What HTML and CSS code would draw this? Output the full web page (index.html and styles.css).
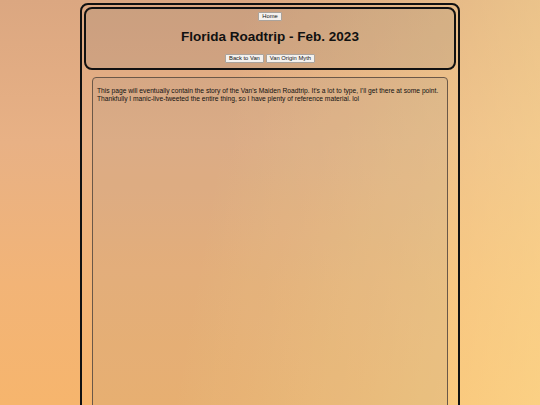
FILE: index.html
```html
<!DOCTYPE html>
<html>
<head>
<meta charset="utf-8">
<link rel="stylesheet" href="styles.css">
</head>
<body>
<div class="page">
  <header class="banner">
    <button class="btn">Home</button>
    <h1 class="title">Florida Roadtrip - Feb. 2023</h1>
    <div class="nav">
      <button class="btn">Back to Van</button>
      <button class="btn">Van Origin Myth</button>
    </div>
  </header>
  <main class="story">
    <p>This page will eventually contain the story of the Van's Maiden Roadtrip. It's a lot to type, I'll get there at some point. Thankfully I manic-live-tweeted the entire thing, so I have plenty of reference material. lol</p>
  </main>
</div>
</body>
</html>
```
FILE: styles.css
```css
html, body {
  margin: 0;
  height: 100%;
}
body {
  font-family: "Liberation Sans", Arial, sans-serif;
  background:
    linear-gradient(100deg, rgba(255,255,255,0) 40%, rgba(255,230,150,0.55) 100%),
    linear-gradient(180deg, #dba781 0%, #e8b185 35%, #f2b477 70%, #f6b56d 100%);
  overflow: hidden;
}
* {
  box-sizing: border-box;
}
.page {
  width: 380px;
  margin: 3px auto 0;
  border: 2px solid #111;
  border-radius: 8px;
  padding: 2px;
  height: 420px;
}
.banner {
  border: 2px solid #111;
  border-radius: 8px;
  background: rgba(120, 120, 120, 0.16);
  height: 63px;
  display: flex;
  flex-direction: column;
  align-items: center;
  padding-top: 3px;
}
.btn {
  font-family: "Liberation Sans", Arial, sans-serif;
  font-size: 5.8px;
  padding: 0 3px;
  height: 9px;
  background: #f4f1ee;
  border: 1px solid #aaa39c;
  border-radius: 1px;
  color: #111;
  line-height: 7px;
}
.title {
  font-size: 13.5px;
  margin: 8px 0 9px;
  color: #111;
  line-height: 16px;
}
.nav {
  display: flex;
  gap: 2px;
}
.story {
  margin: 7px 8px 0;
  border: 1px solid #6b5848;
  border-radius: 4px;
  background: rgba(140, 140, 140, 0.14);
  height: 400px;
  padding: 9px 2px 9px 4px;
}
.story p {
  margin: 0;
  font-size: 6.7px;
  line-height: 7.5px;
  color: #111;
}
```
